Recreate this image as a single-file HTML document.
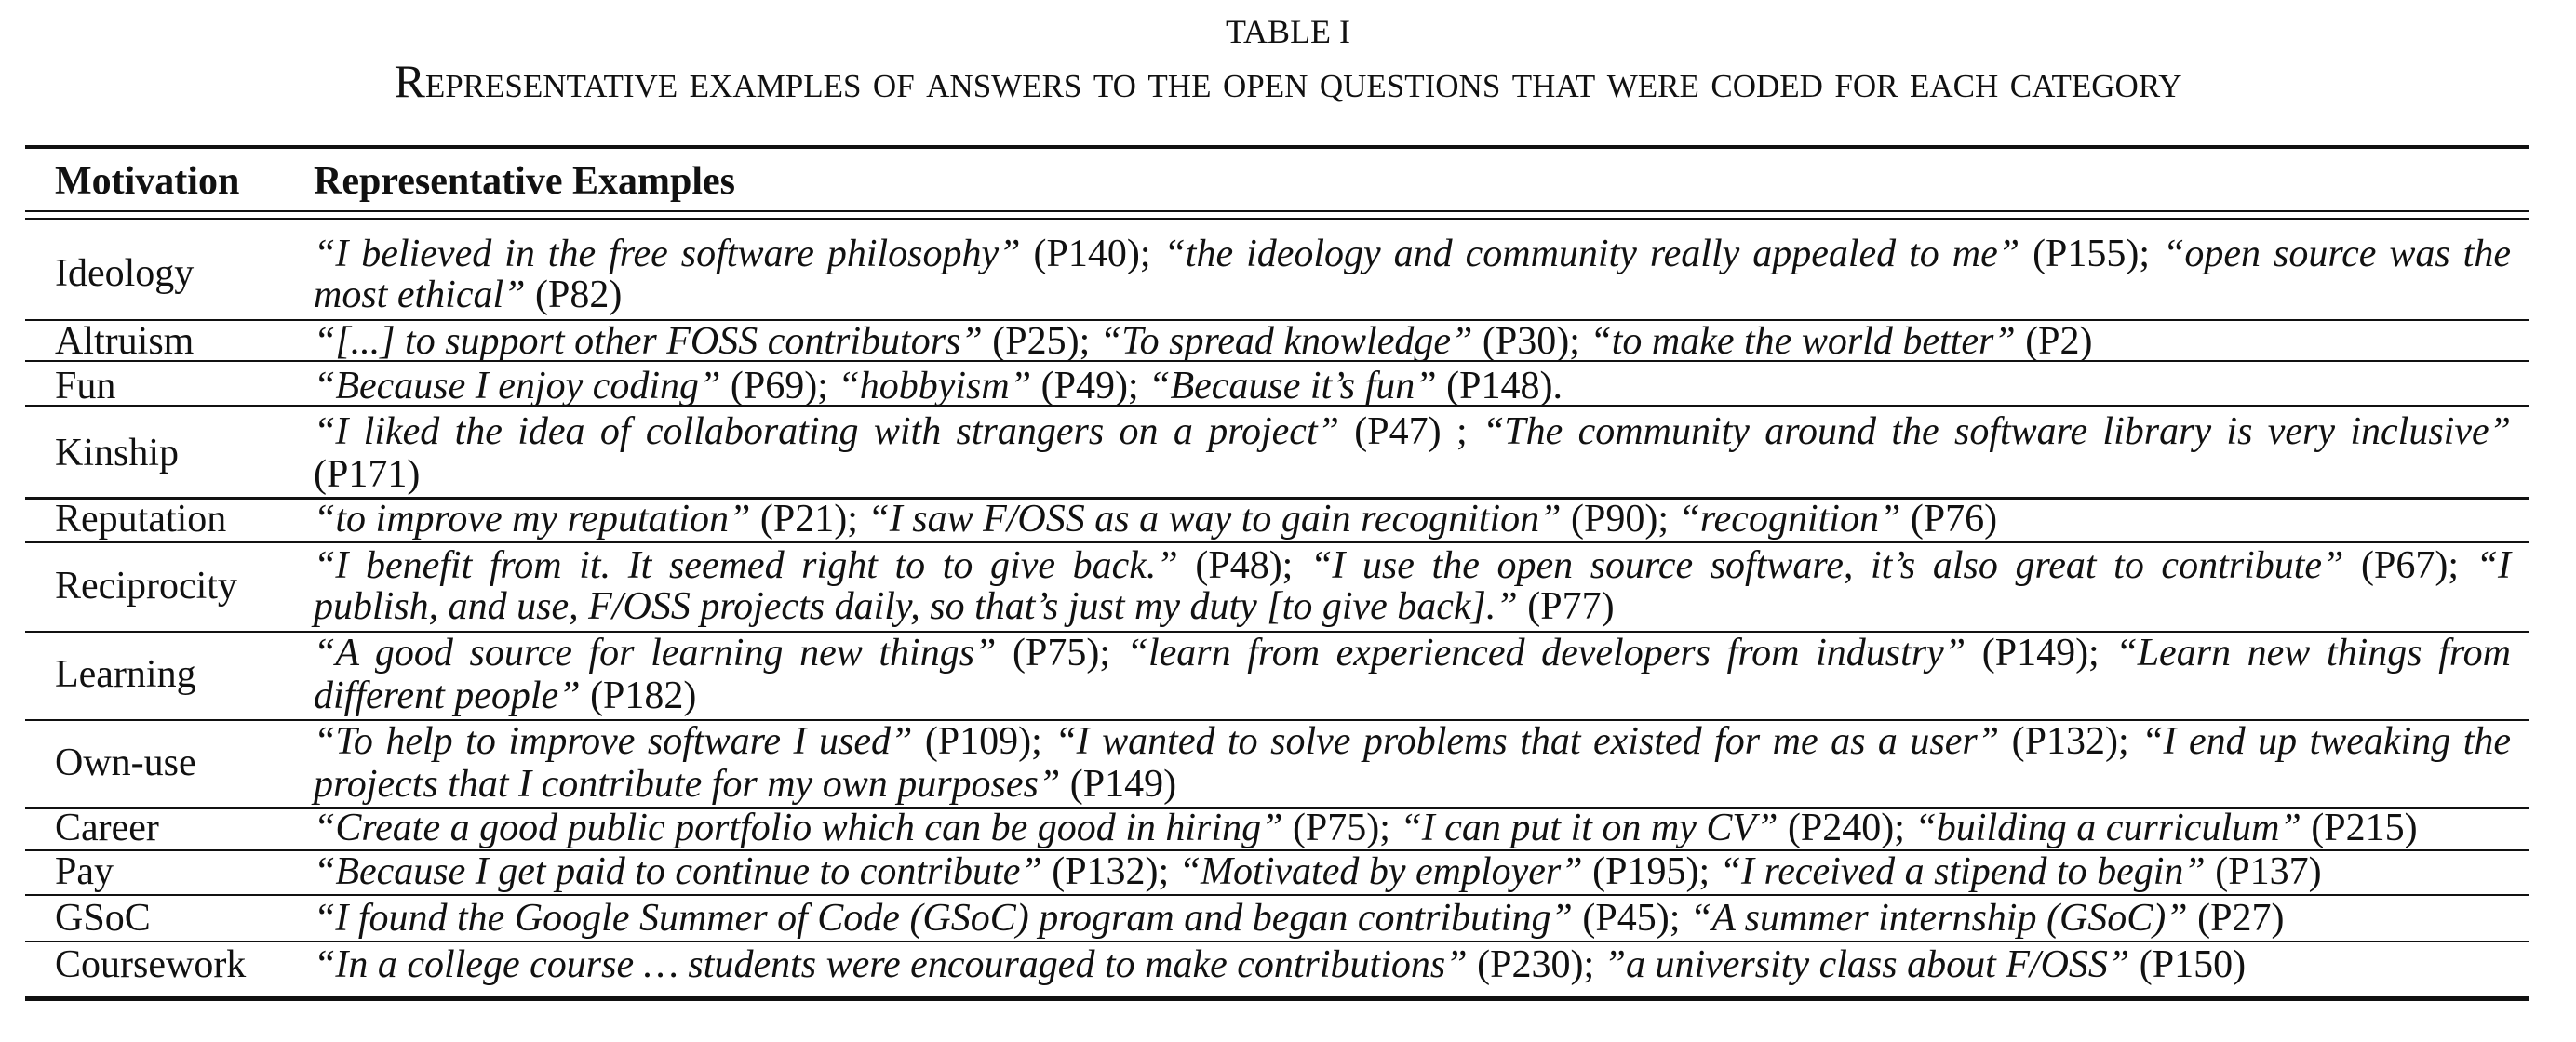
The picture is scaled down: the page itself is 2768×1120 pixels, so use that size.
<!DOCTYPE html>
<html><head><meta charset="utf-8"><style>
body{margin:0;width:2768px;height:1120px;background:#fff;position:relative;overflow:hidden;font-family:"Liberation Serif",serif;color:#111}
.r{position:absolute;left:27px;width:2690px;background:#111}
.t{position:absolute;line-height:46px;font-size:42px;white-space:nowrap}
.l{left:59px}
.x{left:337px;width:2361px;white-space:normal}
.j{text-align:justify;text-align-last:justify}
i{font-style:italic}
.cap{position:absolute;width:2768px;text-align:center;left:0}
</style></head><body>
<div class="cap" style="top:14px;font-size:36px;line-height:40px">TABLE I</div>
<div class="cap" style="top:60px;font-size:50px;line-height:54px;font-variant:small-caps">Representative examples of answers to the open questions that were coded for each category</div>

<div class="r" style="top:156px;height:4px"></div>
<div class="r" style="top:226px;height:2px"></div>
<div class="r" style="top:234px;height:3px"></div>
<div class="r" style="top:343px;height:2px"></div>
<div class="r" style="top:387px;height:2px"></div>
<div class="r" style="top:435px;height:2px"></div>
<div class="r" style="top:534px;height:3px"></div>
<div class="r" style="top:582px;height:2px"></div>
<div class="r" style="top:678px;height:2px"></div>
<div class="r" style="top:773px;height:2px"></div>
<div class="r" style="top:867px;height:3px"></div>
<div class="r" style="top:913px;height:2px"></div>
<div class="r" style="top:961px;height:2px"></div>
<div class="r" style="top:1011px;height:2px"></div>
<div class="r" style="top:1071px;height:5px"></div>

<div class="t l" style="top:172px;font-weight:bold">Motivation</div>
<div class="t x" style="top:172px;font-weight:bold">Representative Examples</div>

<div class="t l" style="top:271px">Ideology</div>
<div class="t x j" style="top:250px"><i>“I believed in the free software philosophy”</i> (P140); <i>“the ideology and community really appealed to me”</i> (P155); <i>“open source was the</i></div>
<div class="t x" style="top:294px"><i>most ethical”</i> (P82)</div>

<div class="t l" style="top:344px">Altruism</div>
<div class="t x" style="top:344px"><i>“[...] to support other FOSS contributors”</i> (P25); <i>“To spread knowledge”</i> (P30); <i>“to make the world better”</i> (P2)</div>

<div class="t l" style="top:392px">Fun</div>
<div class="t x" style="top:392px"><i>“Because I enjoy coding”</i> (P69); <i>“hobbyism”</i> (P49); <i>“Because it’s fun”</i> (P148).</div>

<div class="t l" style="top:464px">Kinship</div>
<div class="t x j" style="top:441px"><i>“I liked the idea of collaborating with strangers on a project”</i> (P47) ; <i>“The community around the software library is very inclusive”</i></div>
<div class="t x" style="top:487px">(P171)</div>

<div class="t l" style="top:535px">Reputation</div>
<div class="t x" style="top:535px"><i>“to improve my reputation”</i> (P21); <i>“I saw F/OSS as a way to gain recognition”</i> (P90); <i>“recognition”</i> (P76)</div>

<div class="t l" style="top:607px">Reciprocity</div>
<div class="t x j" style="top:585px"><i>“I benefit from it. It seemed right to to give back.”</i> (P48); <i>“I use the open source software, it’s also great to contribute”</i> (P67); <i>“I</i></div>
<div class="t x" style="top:629px"><i>publish, and use, F/OSS projects daily, so that’s just my duty [to give back].”</i> (P77)</div>

<div class="t l" style="top:702px">Learning</div>
<div class="t x j" style="top:679px"><i>“A good source for learning new things”</i> (P75); <i>“learn from experienced developers from industry”</i> (P149); <i>“Learn new things from</i></div>
<div class="t x" style="top:725px"><i>different people”</i> (P182)</div>

<div class="t l" style="top:797px">Own-use</div>
<div class="t x j" style="top:774px"><i>“To help to improve software I used”</i> (P109); <i>“I wanted to solve problems that existed for me as a user”</i> (P132); <i>“I end up tweaking the</i></div>
<div class="t x" style="top:820px"><i>projects that I contribute for my own purposes”</i> (P149)</div>

<div class="t l" style="top:867px">Career</div>
<div class="t x" style="top:867px"><i>“Create a good public portfolio which can be good in hiring”</i> (P75); <i>“I can put it on my CV”</i> (P240); <i>“building a curriculum”</i> (P215)</div>

<div class="t l" style="top:914px">Pay</div>
<div class="t x" style="top:914px"><i>“Because I get paid to continue to contribute”</i> (P132); <i>“Motivated by employer”</i> (P195); <i>“I received a stipend to begin”</i> (P137)</div>

<div class="t l" style="top:964px">GSoC</div>
<div class="t x" style="top:964px"><i>“I found the Google Summer of Code (GSoC) program and began contributing”</i> (P45); <i>“A summer internship (GSoC)”</i> (P27)</div>

<div class="t l" style="top:1014px">Coursework</div>
<div class="t x" style="top:1014px"><i>“In a college course … students were encouraged to make contributions”</i> (P230); <i>”a university class about F/OSS”</i> (P150)</div>
</body></html>
